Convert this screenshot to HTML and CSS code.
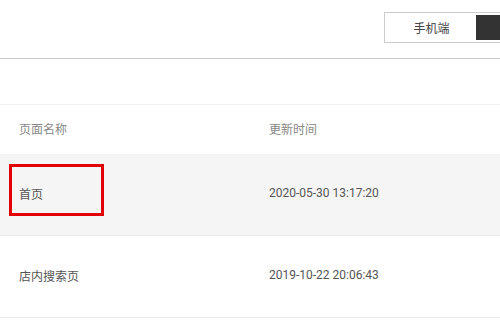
FILE: index.html
```html
<!DOCTYPE html>
<html lang="zh">
<head>
<meta charset="utf-8">
<link rel="stylesheet" href="styles.css">
</head>
<body>
<div class="page">
  <div class="topbar">
    <div class="toggle">
      <span class="seg">手机端</span>
      <span class="seg seg-active"></span>
    </div>
  </div>
  <div class="table">
    <div class="row head">
      <div class="cell c1">页面名称</div>
      <div class="cell c2">更新时间</div>
    </div>
    <div class="row body alt">
      <div class="cell c1"><span class="marked">首页</span></div>
      <div class="cell c2">2020-05-30 13:17:20</div>
    </div>
    <div class="row body">
      <div class="cell c1">店内搜索页</div>
      <div class="cell c2">2019-10-22 20:06:43</div>
    </div>
  </div>
</div>
</body>
</html>
```

FILE: styles.css
```css
html, body {
  margin: 0;
  padding: 0;
  background: #fff;
  overflow: hidden;
}
.page {
  width: 500px;
  height: 330px;
  font-family: Roboto, "Noto Sans CJK SC", sans-serif;
  font-size: 12px;
  color: #555;
}
.topbar {
  height: 59px;
  border-bottom: 1px solid #cccccc;
  box-sizing: border-box;
  display: flex;
  align-items: flex-start;
  padding: 12px 0 0 384px;
  overflow: hidden;
}
.toggle {
  display: flex;
  flex: none;
  border: 1px solid #cccccc;
  padding: 2px;
  height: 25px;
}
.seg {
  width: 89px;
  display: flex;
  align-items: center;
  justify-content: center;
  color: #444;
  font-size: 12px;
}
.seg-active {
  background: #333;
}
.table {
  margin-top: 45px;
  border-top: 1px solid #f0f0f0;
}
.row {
  display: flex;
  align-items: center;
  box-sizing: border-box;
}
.row.head {
  height: 49px;
  color: #888;
  padding-bottom: 2px;
}
.row.body {
  height: 82px;
  border-bottom: 1px solid #ececec;
  padding-bottom: 3px;
}
.row.alt {
  background: #f5f5f5;
}
.cell.c1 {
  width: 250px;
  padding-left: 19px;
  box-sizing: border-box;
}
.cell.c2 {
  flex: 1;
  padding-left: 19px;
}
.marked {
  position: relative;
}
.marked::after {
  content: "";
  position: absolute;
  left: -10px;
  top: -24px;
  width: 89px;
  height: 46px;
  border: 3px solid #e30000;
}
```
